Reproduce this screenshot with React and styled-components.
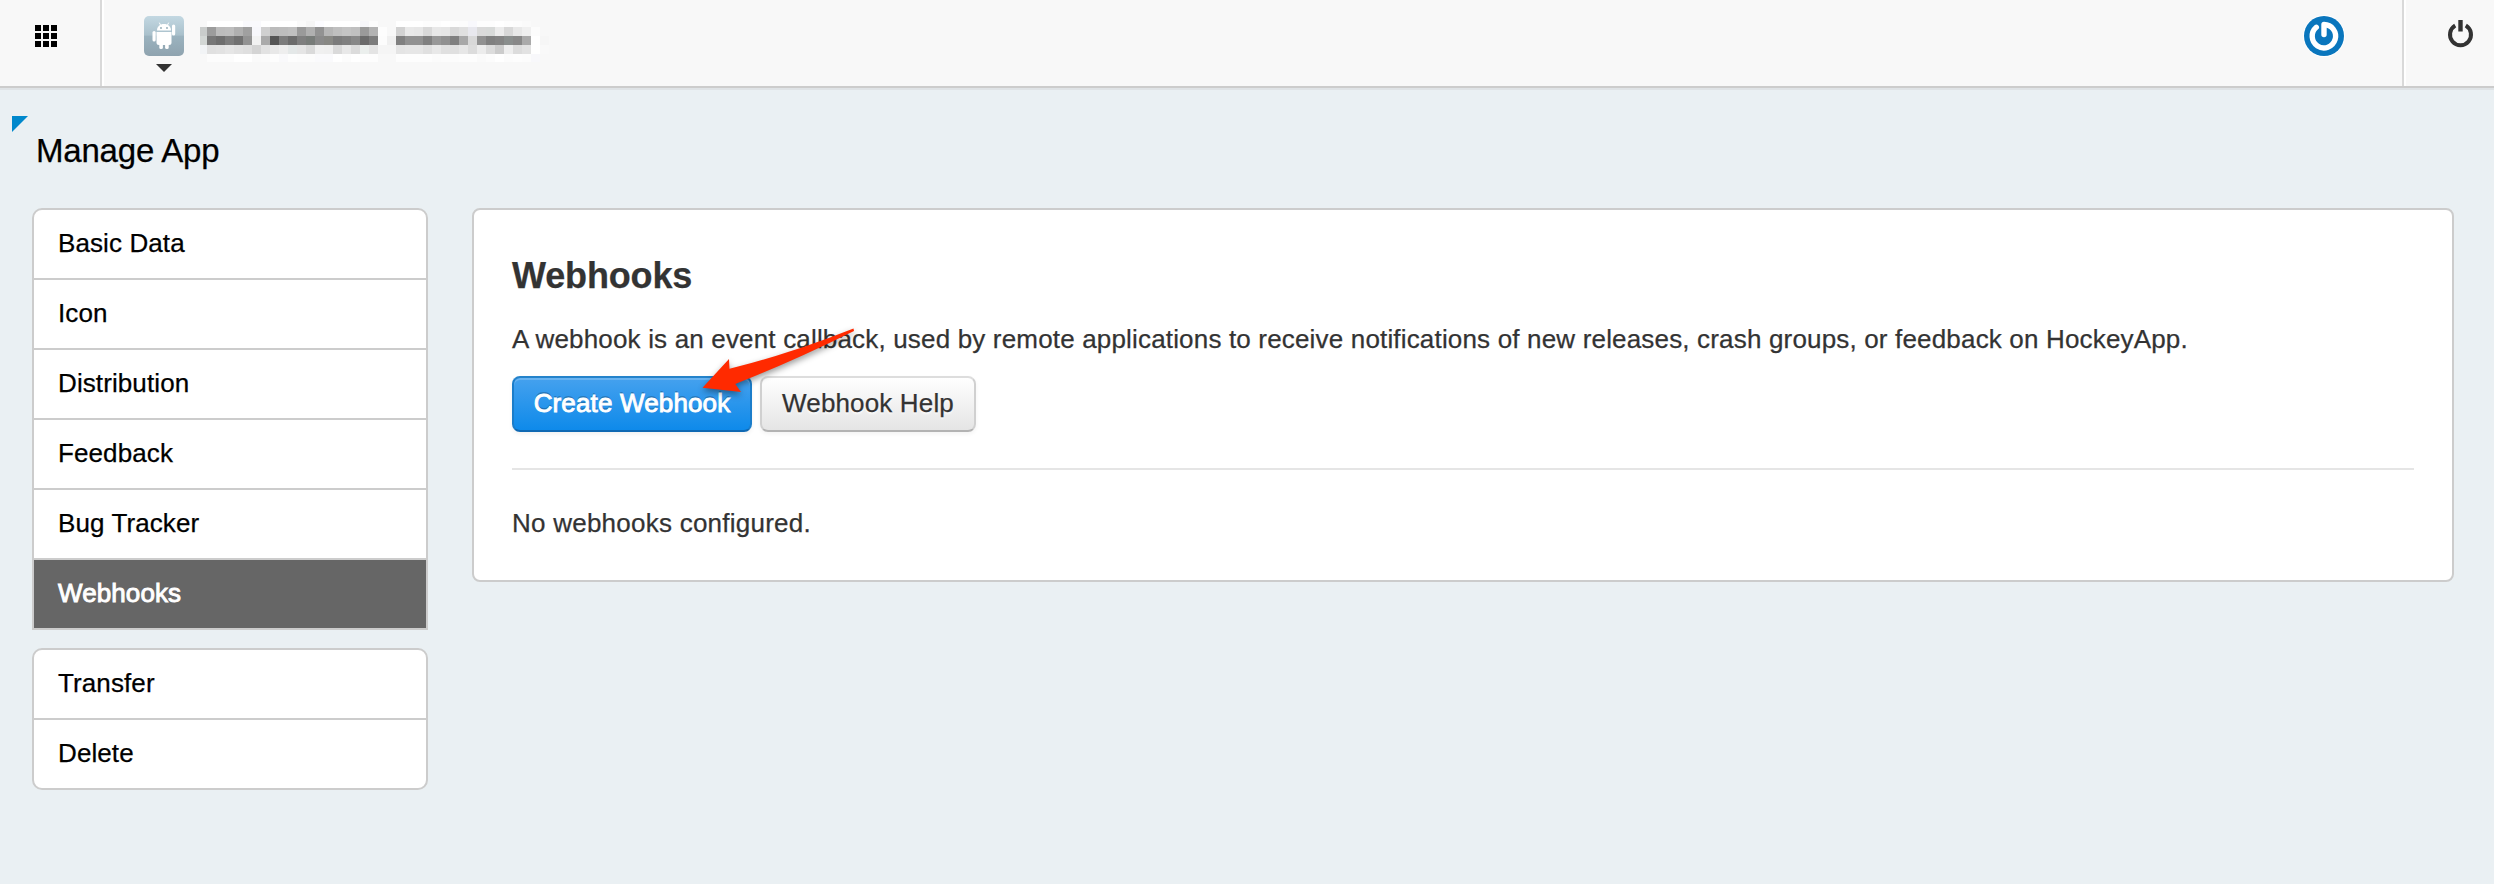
import React from "react";
import styled, { createGlobalStyle } from "styled-components";

const Global = createGlobalStyle`
  * { box-sizing: border-box; }
  body { margin: 0; background: #eaf0f3; font-family: "Liberation Sans", Arial, sans-serif; font-size: 26px; color: #333; -webkit-text-stroke: 0.25px currentColor; }
  h1, h2, p, ul { margin: 0; padding: 0; font-weight: normal; }
`;

const Page = styled.div`
  height: 884px;
  overflow: hidden;
  background: #eaf0f3;
`;

const Header = styled.header`
  display: flex;
  height: 88px;
  background: #f8f8f8;
  border-bottom: 2px solid #ccc;
  box-shadow: 0 2px 0 #dfe3e6;
`;

const MenuCell = styled.div`
  width: 102px;
  padding: 25px 0 0 35px;
  border-right: 2px solid #d9d9d9;
`;

const AppCell = styled.div`
  flex: 1;
  display: flex;
  padding-left: 40px;
  border-left: 2px solid #fff;
`;

const AppPicker = styled.div`
  width: 40px;
  padding-top: 16px;
  display: flex;
  flex-direction: column;
  align-items: center;
  gap: 8px;
`;

const AppIcon = styled.svg`
  display: block;
  width: 40px;
  height: 40px;
`;

const Caret = styled.div`
  border: 8px solid transparent;
  border-top-color: #333;
  border-bottom: 0;
`;

const Mosaic = styled.div`
  display: grid;
  grid-template-columns: 7px repeat(38, 9px);
  grid-template-rows: 6px 9px 9px 9px 8px;
  margin: 21px 0 0 16px;
  align-self: flex-start;
`;

const Block = styled.i`
  background: ${(p) => p.$tone};
`;

const UserCell = styled.div`
  width: 100px;
  padding-top: 16px;
  border-right: 2px solid #d9d9d9;
`;

const PowerCell = styled.div`
  width: 90px;
  padding: 19px 0 0 42px;
  border-left: 2px solid #fff;
`;

const Glyph = styled.svg`
  display: block;
  overflow: visible;
`;

const TitleBar = styled.div`
  height: 120px;
  padding: 28px 0 0 12px;
  display: flex;
`;

const Corner = styled.div`
  width: 16px;
  height: 16px;
  background: #08c;
  clip-path: polygon(0 0, 100% 0, 0 100%);
`;

const Title = styled.h1`
  margin: 15px 0 0 8px;
  font-size: 33px;
  line-height: 40px;
  color: #000;
  letter-spacing: -0.2px;
`;

const Body = styled.main`
  display: flex;
  align-items: flex-start;
  gap: 44px;
  padding: 0 40px 0 32px;
`;

const Sidebar = styled.nav`
  width: 396px;
  display: flex;
  flex-direction: column;
  gap: 18px;
`;

const NavGroup = styled.ul`
  list-style: none;
  background: #fff;
  border: 2px solid #ccc;
  border-radius: ${(p) => (p.$open ? "10px 10px 0 0" : "10px")};
`;

const NavItem = styled.li`
  height: ${(p) => (p.$last ? 68 : 70)}px;
  padding-left: 24px;
  line-height: 66px;
  letter-spacing: 0.1px;
  border-bottom: ${(p) => (p.$last ? "0" : "2px solid #ccc")};
  background: ${(p) => (p.$active ? "#666" : "transparent")};
  color: ${(p) => (p.$active ? "#fff" : "#000")};
  -webkit-text-stroke: ${(p) => (p.$active ? "0.9px #fff" : "0.25px #000")};
`;

const Panel = styled.section`
  flex: 1;
  height: 374px;
  padding: 46px 38px 0;
  background: #fff;
  border: 2px solid #ccc;
  border-radius: 8px;
`;

const Heading = styled.h2`
  font-size: 36px;
  font-weight: bold;
  line-height: 40px;
  letter-spacing: -0.15px;
`;

const Text = styled.p`
  line-height: 40px;
  white-space: nowrap;
  letter-spacing: ${(p) => p.$track || 0}px;
`;

const Description = styled(Text)`
  margin-top: 23px;
`;

const Actions = styled.div`
  position: relative;
  display: flex;
  gap: 8px;
  margin-top: 17px;
  padding-bottom: 36px;
  border-bottom: 2px solid #e5e5e5;
`;

const Button = styled.button`
  width: ${(p) => p.$width}px;
  height: 56px;
  padding: 0 0 2px;
  font: inherit;
  line-height: 50px;
  letter-spacing: 0.15px;
  white-space: nowrap;
  border-radius: 8px;
  border: 2px solid;
  ${(p) =>
    p.$primary
      ? `
    color: #fff;
    border-color: #2483cb #1b7dca #1069b3;
    background: linear-gradient(#45a1ee, #0e8aea);
    box-shadow: inset 0 2px 0 rgba(255,255,255,.2), 0 2px 4px rgba(0,0,0,.06);
    text-shadow: 0 -2px 0 rgba(0,0,0,.22);
    -webkit-text-stroke: 0.9px #fff;`
      : `
    color: #333;
    border-color: #ddd #d0d0d0 #b3b3b3;
    background: linear-gradient(#fff, #e5e5e5);
    box-shadow: 0 2px 4px rgba(0,0,0,.05);
    text-shadow: 0 2px 2px rgba(255,255,255,.75);
    -webkit-text-stroke: 0.25px #333;`}
`;

const Arrow = styled.svg`
  position: absolute;
  left: 188px;
  top: -50px;
  overflow: visible;
  filter: drop-shadow(0 3px 3px rgba(0, 0, 0, 0.4));
`;

const Empty = styled(Text)`
  margin-top: 33px;
`;

const tones = [
  "f8f8f8 fff fff fff fff f9f9fc f9f9fc fff fff fff fff fafafa f5f5f5 fcfcff fff fff fff fff f6f6f9 fcfcfc f8f8f8 f8f8f8 fff fff fff fdfdfd fdfdfd fff fdfdfd fcfcfc f8f8fc fdfdfd fdfdfd fff fdfdfd fcfcfc fafafa f8f8f8 f8f8f8",
  "c9cccb 9c9c9c bcbcbc bebebe b0b0b0 a0a0a0 f7f7fb d0d0d0 bbb bdbdbd c0c0c0 9a9a9a b0b0b0 929292 b6b6b6 bfbfbf c4c4c4 c0c0c0 9a9a9a b3b3b3 fdfdfd f8f8f8 d2d2d2 e9e9e9 e7e7e7 d9d9d9 e8e8e8 e6e6e6 d9d9d9 e0e0e0 e8e8ee dadada d8dad9 ececec d8d8d8 e8e8e8 f0f0f0 fcfcfc f8f8f8",
  "d3d7d5 777 6e6e6e 7d7d7d 717171 939393 f2f2f2 aaa 555 7c7c7c 6c6c6c 7f7f7f 787c79 8a8a8a 888884 7b7b7b 808080 888 6b6b6b 7c7c7c fcfcfc f0f0f0 808080 919191 919191 808080 989898 909090 808080 a8a8a8 d8d8d8 919191 808080 848484 8a8e8d 888 aaa fff f6f6f6",
  "f2f4f6 e0e0e0 e2e2e2 e6e6e6 e2e2e2 dfdfdf d4d4d4 e2e2e2 e8e8e8 eee e4e8e8 e5e5e5 dadada f0f0f0 efefef dadada e8e8e8 dcdcdc ebefed e4e4e4 f5f5f5 f5f5f5 e4e4e4 e6e6e6 e6e6e6 e0e0e0 e8e8e8 e0e0e0 e0e0e0 e7e7e7 dcdcdc ececec dcdcdc ccc eee dcdcdc e2e2e2 fff f9f9f9",
  "f8f8f8 fcfcfc fcfcfc fcfcfc fff fff fafafa fbfbfb fdfdfd f9f9fb fdfdfd fcfcfc fcfcfc fafafc fafafc fff fcfcfc fff fdfdfd fdfdfd f8f8f8 f8f8f8 fdfdfd fdfdfd fdfdfd fdfdfd fbfbfb fcfcfc fcfcfc fdfdfd fdfdfd fafafa fcfcfc fff fcfcfc fdfdfd fcfcfc f8f8fb f8f8f8",
].flatMap((row) => row.split(" "));

const groups = [
  ["Basic Data", "Icon", "Distribution", "Feedback", "Bug Tracker", "Webhooks"],
  ["Transfer", "Delete"],
];

function GridIcon() {
  return (
    <Glyph width="22" height="22" viewBox="0 0 22 22" shapeRendering="crispEdges">
      {[0, 8, 16].map((y) => [0, 8, 16].map((x) => <rect key={`${x}-${y}`} x={x} y={y} width="6" height="6" />))}
    </Glyph>
  );
}

function AndroidIcon() {
  return (
    <AppIcon viewBox="0 0 40 40">
      <defs>
        <linearGradient id="tile" x2="0" y2="1">
          <stop offset="0" stopColor="#c3d8e2" />
          <stop offset=".48" stopColor="#a9c0cb" />
          <stop offset=".5" stopColor="#9bb3bf" />
          <stop offset="1" stopColor="#8fa3af" />
        </linearGradient>
      </defs>
      <rect width="40" height="40" rx="5" fill="url(#tile)" />
      <g fill="#fff">
        <path d="M13 14.5c0-4 3-6.500 7-6.500s7 2.500 7 6.500z" />
        <path d="M15.500 7l1.500 3M24.500 7l-1.500 3" stroke="#fff" strokeLinecap="round" />
        <path d="M12.500 16h15v10.500a2.500 2.500 0 0 1-2.500 2.500h-10a2.500 2.500 0 0 1-2.500-2.500z" />
        <rect x="8.500" y="15" width="3.200" height="10.500" rx="1.600" />
        <rect x="28" y="8.500" width="3.200" height="11" rx="1.600" />
        <rect x="15.300" y="27" width="3.600" height="6" rx="1.600" />
        <rect x="21.100" y="27" width="3.600" height="6" rx="1.600" />
      </g>
      <circle cx="17" cy="12" r=".9" fill="#8fa9b5" />
      <circle cx="23" cy="12" r=".9" fill="#8fa9b5" />
    </AppIcon>
  );
}

function AvatarIcon() {
  return (
    <Glyph width="40" height="40" viewBox="0 0 40 40">
      <circle cx="20" cy="20" r="21" fill="#fff" />
      <circle cx="20" cy="20" r="20" fill="#0a76bd" />
      <path d="M12.300 11.300A11.700 11.700 0 1 0 20 8.500V18.500" fill="none" stroke="#fff" strokeWidth="5.400" strokeLinecap="round" strokeLinejoin="round" />
    </Glyph>
  );
}

function PowerIcon() {
  return (
    <Glyph width="25" height="29" viewBox="0 0 25 29" fill="none" stroke="#333">
      <path d="M7.200 6.600A10.500 10.500 0 1 0 17.800 6.600" strokeWidth="4" />
      <path d="M12.500 1V12.500" strokeWidth="4.400" />
    </Glyph>
  );
}

export default function App() {
  return (
    <Page>
      <Global />
      <Header>
        <MenuCell><GridIcon /></MenuCell>
        <AppCell>
          <AppPicker>
            <AndroidIcon />
            <Caret />
          </AppPicker>
          <Mosaic>
            {tones.map((tone, i) => <Block key={i} $tone={`#${tone}`} />)}
          </Mosaic>
        </AppCell>
        <UserCell><AvatarIcon /></UserCell>
        <PowerCell><PowerIcon /></PowerCell>
      </Header>
      <TitleBar>
        <Corner />
        <Title>Manage App</Title>
      </TitleBar>
      <Body>
        <Sidebar>
          {groups.map((items, g) => (
            <NavGroup key={g} $open={g === 0}>
              {items.map((label, i) => (
                <NavItem key={label} $last={i === items.length - 1} $active={label === "Webhooks"}>{label}</NavItem>
              ))}
            </NavGroup>
          ))}
        </Sidebar>
        <Panel>
          <Heading>Webhooks</Heading>
          <Description $track={0.17}>
            A webhook is an event callback, used by remote applications to receive notifications of new releases, crash groups, or feedback on HockeyApp.
          </Description>
          <Actions>
            <Button $primary $width={240}>Create Webhook</Button>
            <Button $width={216}>Webhook Help</Button>
            <Arrow width="156" height="68" viewBox="700 326 156 68">
              <path d="M702.500 387.700L729 359L729.500 368.700Q790 354 853.500 328.600L854 331Q796 360 735.300 384L741 392Z" fill="#ff2a00" />
            </Arrow>
          </Actions>
          <Empty $track={0.24}>No webhooks configured.</Empty>
        </Panel>
      </Body>
    </Page>
  );
}
